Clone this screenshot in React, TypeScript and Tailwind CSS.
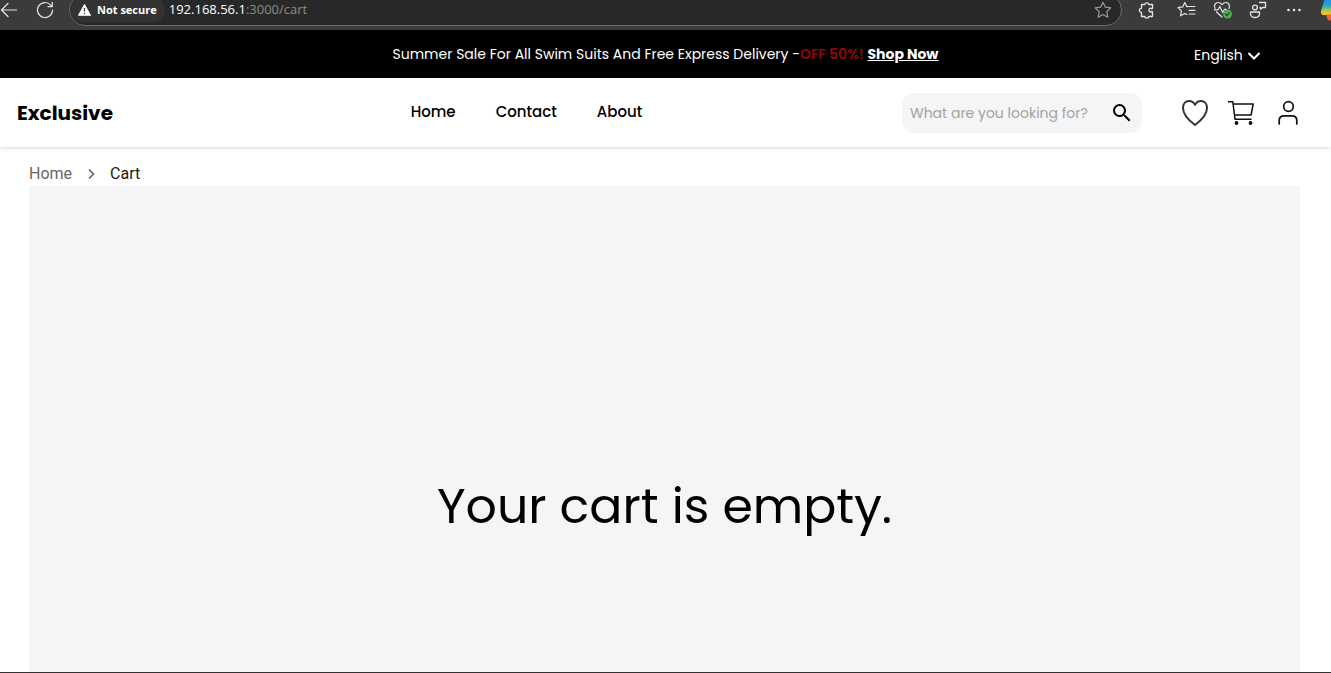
import React from "react";

function CopilotLogo() {
  return (
    <svg width="22" height="22" viewBox="0 0 22 22" className="shrink-0" aria-hidden="true">
      <defs>
        <linearGradient id="cool" x1="0" y1="0" x2="0" y2="1">
          <stop offset="0" stopColor="#1c8fe8" />
          <stop offset="0.4" stopColor="#22a3d6" />
          <stop offset="0.65" stopColor="#8cc45a" />
          <stop offset="0.9" stopColor="#f3c81c" />
        </linearGradient>
      </defs>
      <path d="M6 0h9l-3 16H3c-2.500 0-3.500-2-2.800-4.500L3 2c.6-1.300 1.500-2 3-2z" fill="url(#cool)" />
      <path d="M5.500 15.500h7.500l7-9v8c-1 5-3 7-6 7h-4.500c-3 0-4-2-4-6z" fill="#f2603c" />
    </svg>
  );
}

function BrowserBar() {
  return (
    <div className="flex h-[30px] shrink-0 items-end overflow-hidden bg-[#3b3b3b] pb-1 text-[#e6e6e6]">
      <div className="flex h-8 w-[69px] shrink-0 items-center gap-[18px]">
        <button aria-label="Back">
          <svg width="18" height="18" viewBox="0 0 18 18" fill="none" stroke="currentColor" strokeWidth="1.2" strokeLinecap="round" strokeLinejoin="round">
            <path d="M16.500 9H1.500M8 2.500 1.500 9 8 15.500" />
          </svg>
        </button>
        <button aria-label="Refresh">
          <svg width="18" height="18" viewBox="0 0 18 18" fill="none" stroke="currentColor" strokeWidth="1.200" strokeLinecap="round" strokeLinejoin="round">
            <path d="M16.500 9a7.500 7.500 0 1 1-2-5.100l1.500 1.500M16.300 1.300v4.300h-4.300" />
          </svg>
        </button>
      </div>
      <div className="flex h-8 min-w-0 flex-1 items-center rounded-full border border-[#6a6a6a] bg-[#282828] pr-2 font-['Open_Sans','Noto_Sans',sans-serif]">
        <div className="flex h-6 items-center gap-1.5 rounded-full bg-[#333333] pr-2 pl-2 text-[11px] font-bold text-white">
          <svg width="13" height="12" viewBox="0 0 13 12" aria-hidden="true">
            <path d="M6.500 .8 12.300 11.200H.7z" fill="#fff" stroke="#fff" strokeWidth="1.200" strokeLinejoin="round" />
            <path d="M6.500 4v3.600M6.500 8.800v1.300" stroke="#333" strokeWidth="1.200" />
          </svg>
          Not secure
        </div>
        <div className="ml-1 flex-1 truncate text-[13px] text-[#8c8c8c]">
          <span className="text-white">192.168.56.1</span>:3000/cart
        </div>
        <button aria-label="Add to favorites" className="text-[#9a9a9a]">
          <svg width="20" height="20" viewBox="0 0 20 20" fill="none" stroke="currentColor" strokeWidth="1.200" strokeLinejoin="round">
            <path d="m10 2.200 2.400 5 5.400.7-4 3.800 1 5.500-4.800-2.700-4.800 2.700 1-5.500-4-3.800 5.400-.7z" />
          </svg>
        </button>
      </div>
      <div className="flex h-8 w-[209px] shrink-0 items-center overflow-hidden pl-4">
        <button aria-label="Extensions">
          <svg width="18" height="18" viewBox="0 0 18 18" fill="none" stroke="currentColor" strokeWidth="1.300" strokeLinejoin="round">
            <path d="M3.500 3.500h3.200a2.100 2.100 0 0 1 4.100 0h3.700v3.700a.5.500 0 0 1-.8.400 1.800 1.800 0 1 0 0 3 .5.500 0 0 1 .8.400v4.500h-3.700a2.100 2.100 0 0 1-4.100 0H3.500v-4a2.100 2.100 0 0 1 0-4.200z" />
          </svg>
        </button>
        <div className="mx-[10px] h-4 w-px bg-[#626262]" />
        <button aria-label="Favorites" className="ml-px">
          <svg width="20" height="18" viewBox="0 0 20 18" fill="none" stroke="currentColor" strokeWidth="1.200" strokeLinecap="round" strokeLinejoin="round">
            <path d="M10.500 5.500H18M12 9.300h6M12 13h6M10.300 5.700H9.800L7.800 1.600 5.700 5.900 1 6.600l3.400 3.300-.8 4.900 4.200-2.300 1.900 1" />
          </svg>
        </button>
        <button aria-label="Browser essentials" className="ml-4">
          <svg width="20" height="18" viewBox="0 0 20 18" fill="none" stroke="currentColor" strokeWidth="1.200" strokeLinecap="round" strokeLinejoin="round">
            <path d="M2 7.500C.5 4.500 2.300 1.500 5 1.500c2 0 3 1 4 2.200C10 2.500 11.200 1.500 13 1.500c2.700 0 4.300 3 3 6M3.500 11 9 16M1.500 8.800H5l1.800-3.300 3 6 1.700-3.200h2" />
            <circle cx="14.500" cy="13" r="4.500" fill="#4caf50" stroke="none" />
            <path d="m12.500 13 1.500 1.500 2.600-2.700" stroke="#234f26" />
          </svg>
        </button>
        <button aria-label="Profiles" className="ml-4">
          <svg width="18" height="18" viewBox="0 0 18 18" fill="none" stroke="currentColor" strokeWidth="1.300" strokeLinejoin="round">
            <circle cx="6" cy="6.500" r="2.400" />
            <path d="M1.500 11h9v1.500c0 2.500-2 4-4.500 4s-4.500-1.500-4.500-4zM10 1.500h6.500v5h-3l-2 1.700V6.500H10.500" />
          </svg>
        </button>
        <button aria-label="Settings and more" className="ml-[18px]">
          <svg width="18" height="18" viewBox="0 0 18 18" fill="currentColor">
            <circle cx="3.500" cy="9" r="1.300" />
            <circle cx="9" cy="9" r="1.300" />
            <circle cx="14.500" cy="9" r="1.300" />
          </svg>
        </button>
        <button aria-label="Copilot" className="ml-[18px] shrink-0">
          <CopilotLogo />
        </button>
      </div>
    </div>
  );
}

function SaleBanner() {
  return (
    <div className="grid h-12 shrink-0 grid-cols-[1fr_auto_1fr] items-center bg-black text-sm text-white">
      <p className="col-start-2">
        Summer Sale For All Swim Suits And Free Express Delivery -
        <span className="font-semibold text-[#940606]">OFF 50%!</span>{" "}
        <a href="#shop" className="font-bold underline">
          Shop Now
        </a>
      </p>
      <label className="mr-[70px] flex items-center gap-1 justify-self-end pt-0.5">
        <select aria-label="Language" className="appearance-none bg-black text-white">
          <option>English</option>
        </select>
        <svg width="14" height="14" viewBox="0 0 14 14" fill="none" stroke="currentColor" strokeWidth="2" aria-hidden="true">
          <path d="m1.500 5 5.500 5.500L12.500 5" />
        </svg>
      </label>
    </div>
  );
}

function SiteHeader() {
  return (
    <header className="grid h-[69px] shrink-0 grid-cols-3 items-center bg-white pr-[33px] pl-[17px] shadow-[0_1px_4px_rgba(0,0,0,0.16)]">
      <a href="#home" className="text-xl font-bold">
        Exclusive
      </a>
      <nav className="flex gap-10 justify-self-center pr-[262px] text-[15px] font-medium whitespace-nowrap max-lg:pr-0">
        <a href="#home">Home</a>
        <a href="#contact">Contact</a>
        <a href="#about">About</a>
      </nav>
      <div className="flex items-center justify-self-end">
        <div className="mr-10 flex h-10 w-60 items-center rounded-xl bg-[#f5f5f5] px-2">
          <input
            aria-label="Search"
            placeholder="What are you looking for?"
            className="min-w-0 flex-1 bg-transparent text-sm outline-none placeholder:text-[#a3a3a3]"
          />
          <button aria-label="Submit search">
            <svg width="24" height="24" viewBox="0 0 24 24">
              <path d="M15.500 14h-.79l-.28-.27A6.470 6.470 0 0 0 16 9.500 6.500 6.500 0 1 0 9.500 16c1.610 0 3.090-.59 4.230-1.570l.27.280v.79l5 4.990L20.490 19zm-6 0C7.010 14 5 11.990 5 9.500S7.010 5 9.500 5 14 7.010 14 9.500 11.990 14 9.500 14" />
            </svg>
          </button>
        </div>
        <div className="flex items-center gap-5">
          <a href="#wishlist" aria-label="Wishlist">
            <svg width="26" height="26" viewBox="0 0 26 26" fill="none" stroke="#333" strokeWidth="2" strokeLinejoin="round">
              <path d="M13 4.800C11.500 2 9.500 1 7 1 3.500 1 1 4 1 8c0 7 6 12.500 12 17 6-4.500 12-10 12-17 0-4-2.500-7-6-7-2.500 0-4.500 1-6 3.800z" />
            </svg>
          </a>
          <a href="#cart" aria-label="Cart">
            <svg width="26" height="26" viewBox="0 0 26 26" fill="none" stroke="#111" strokeWidth="1.500" strokeLinejoin="round">
              <path d="M0 1.700h4.800l2.200 17.500h16.500M5 4h20.200l-2.100 11H6.500" />
              <circle cx="8.500" cy="23" r="1.900" fill="#111" stroke="none" />
              <circle cx="22.500" cy="23" r="1.900" fill="#111" stroke="none" />
            </svg>
          </a>
          <a href="#account" aria-label="Account" className="ml-1">
            <svg width="20" height="26" viewBox="0 0 20 26" fill="none" stroke="#111" strokeWidth="1.700" strokeLinecap="round">
              <circle cx="10.500" cy="6.500" r="4.800" />
              <path d="M1.200 24v-3.500c0-3 2-4.700 4.800-4.700h8c2.800 0 4.800 1.700 4.800 4.700V24" />
            </svg>
          </a>
        </div>
      </div>
    </header>
  );
}

export default function App() {
  return (
    <div className="flex h-screen flex-col overflow-hidden border-b border-[#333] bg-white font-['Poppins',Inter,sans-serif] text-black">
      <BrowserBar />
      <SaleBanner />
      <SiteHeader />
      <main className="flex-1 overflow-hidden pt-[15px] pr-[31px] pl-[29px]">
        <nav aria-label="Breadcrumb" className="flex h-6 items-center gap-3 font-[Roboto,sans-serif] text-base">
          <a href="#home" className="text-[#666]">
            Home
          </a>
          <svg width="14" height="14" viewBox="0 0 14 14" fill="none" stroke="#666" strokeWidth="1.700" aria-hidden="true">
            <path d="m5 2.500 4.500 4.500L5 11.500" />
          </svg>
          <a href="#cart" aria-current="page" className="text-[#1a1a1a]">
            Cart
          </a>
        </nav>
        <section className="flex min-h-[642px] items-center justify-center bg-[#f5f5f5]">
          <h1 className="text-[49px]">Your cart is empty.</h1>
        </section>
      </main>
    </div>
  );
}
